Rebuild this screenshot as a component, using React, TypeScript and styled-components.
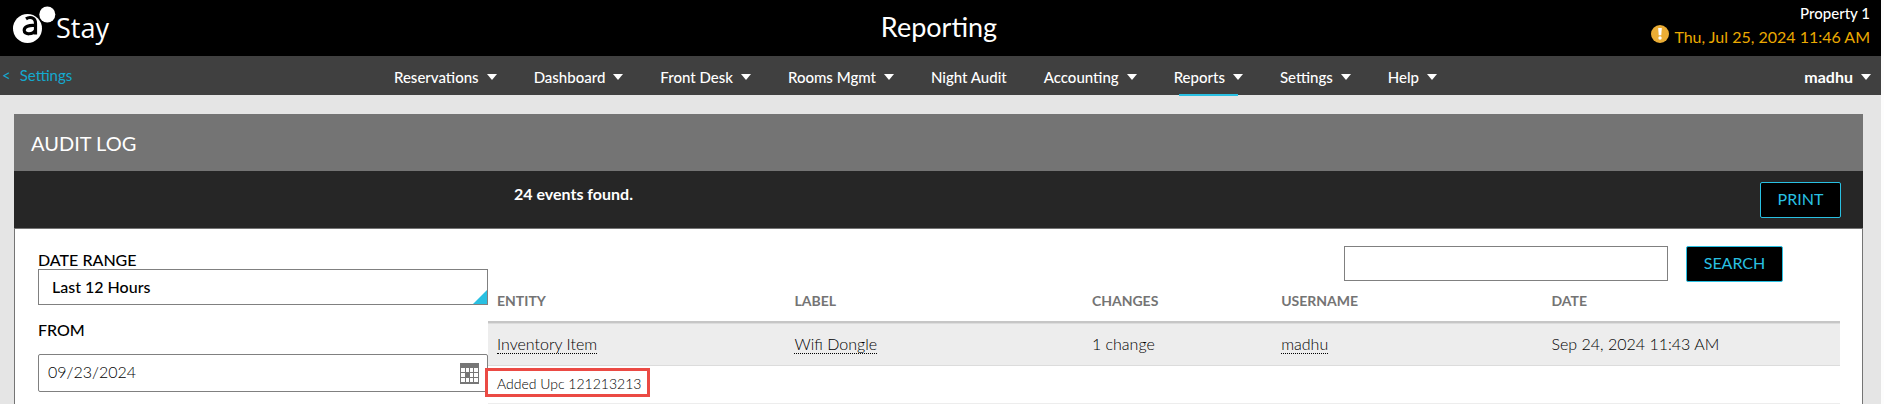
import React from "react";
import styled, { createGlobalStyle } from "styled-components";

const GlobalStyle = createGlobalStyle`
  *, *::before, *::after { box-sizing: border-box; }
  body {
    margin: 0;
    background: #fdfdfd;
    color: #333;
    font: 400 16px/20px Lato, "Liberation Sans", sans-serif;
  }
  button, input, select { font: inherit; }
`;

const Page = styled.div`
  display: flex;
  flex-direction: column;
  min-height: 100vh;
  margin-right: 3px;
  background: #e5e5e5;
`;

const Header = styled.header`
  display: grid;
  grid-template-columns: 1fr auto 1fr;
  align-items: start;
  height: 56px;
  padding: 0 11px 0 12px;
  background: #000;
  color: #fff;
`;

const Logo = styled.a`
  display: flex;
  align-items: flex-start;
  padding-top: 6px;
  color: #fff;
  text-decoration: none;
`;

const LogoText = styled.span`
  padding-top: 6px;
  font: 400 27px/32px "Open Sans", sans-serif;
`;

const Title = styled.h1`
  margin: 0 4px 0 0;
  font-size: 27px;
  font-weight: 400;
  line-height: 53px;
`;

const HeaderInfo = styled.div`
  display: flex;
  flex-direction: column;
  align-items: flex-end;
  gap: 4px;
  padding-top: 3px;
`;

const Property = styled.div`
  font-size: 15px;
  font-weight: 500;
  line-height: 20px;
`;

const Clock = styled.div`
  display: flex;
  align-items: flex-start;
  gap: 5px;
  color: #eba900;

  svg {
    margin-top: -2px;
  }
`;

const Nav = styled.nav`
  display: grid;
  grid-template-columns: 1fr auto 1fr;
  align-items: stretch;
  height: 39px;
  padding: 0 10px 0 2px;
  background: #404040;
`;

const BackLink = styled.a`
  display: flex;
  gap: 9px;
  color: #14a9cf;
  font-size: 15px;
  line-height: 38px;
  text-decoration: none;
`;

const Menu = styled.ul`
  display: flex;
  gap: 37px;
  margin: 0 42px 0 0;
  padding: 0;
  list-style: none;
`;

const MenuItem = styled.li`
  display: flex;
  position: relative;
`;

const ActiveBar = styled.span`
  position: absolute;
  right: 5px;
  bottom: -1px;
  left: 5px;
  height: 2px;
  background: #29c0e2;
`;

const MenuButton = styled.button<{ $bold?: boolean }>`
  display: flex;
  align-items: center;
  gap: 8px;
  padding: 3px 0 0;
  border: 0;
  background: none;
  color: #fff;
  font-size: ${(p) => (p.$bold ? 16 : 15)}px;
  font-weight: ${(p) => (p.$bold ? 700 : 500)};
  cursor: pointer;
`;

const UserArea = styled.div`
  display: flex;
  justify-content: flex-end;
`;

const Caret = styled.span`
  border: 5px solid transparent;
  border-top: 6px solid #fff;
  border-bottom: 0;
`;

const Panel = styled.section`
  display: flex;
  flex: 1;
  flex-direction: column;
  margin: 19px 18px 0 14px;
`;

const PanelTitle = styled.h2`
  margin: 0;
  padding: 1px 17px 0;
  background: #747474;
  color: #fff;
  font-size: 20px;
  font-weight: 400;
  line-height: 56px;
`;

const SummaryBar = styled.div`
  display: flex;
  justify-content: space-between;
  align-items: flex-start;
  height: 57px;
  padding: 11px 22px 0 500px;
  background: #262626;
`;

const Summary = styled.strong`
  padding-top: 2px;
  color: #fff;
  font-size: 16px;
`;

const ActionButton = styled.button<{ $width: number }>`
  width: ${(p) => p.$width}px;
  height: 36px;
  padding: 0 0 2px;
  border: 1px solid #29c0e2;
  border-radius: 2px;
  background: #000;
  color: #29c0e2;
  font-size: 16px;
  cursor: pointer;
`;

const PanelBody = styled.div`
  display: flex;
  flex: 1;
  align-items: flex-start;
  padding: 17px 22px 0 23px;
  border: 1px solid #747474;
  border-bottom: 0;
  background: #fff;
`;

const Filters = styled.form`
  flex: none;
  width: 450px;
  padding-top: 5px;
`;

const FieldLabel = styled.label<{ $gap?: boolean }>`
  display: block;
  padding-bottom: ${(p) => (p.$gap ? 15 : 0)}px;
  color: #000;
  font-size: 16px;
  font-weight: 500;
  line-height: 18px;
`;

const SelectBox = styled.div`
  position: relative;
  margin-bottom: 16px;

  &::after {
    position: absolute;
    right: 1px;
    bottom: 1px;
    border: 7px solid #29c0e2;
    border-top-color: transparent;
    border-left-color: transparent;
    content: "";
    pointer-events: none;
  }
`;

const Select = styled.select`
  display: block;
  width: 100%;
  height: 36px;
  padding: 0 13px;
  border: 1px solid #808080;
  border-radius: 0;
  appearance: none;
  background: #fff;
  color: #000;
  font-weight: 500;
`;

const DateBox = styled.div`
  display: flex;
  align-items: center;
  height: 38px;
  padding: 0 8px 0 9px;
  border: 1px solid #808080;
  border-radius: 2px;
`;

const DateInput = styled.input`
  flex: 1;
  min-width: 0;
  padding: 0 0 2px;
  border: 0;
  outline: 0;
  background: none;
  color: #000;
  font-weight: 300;
`;

const IconButton = styled.button`
  display: flex;
  padding: 0;
  border: 0;
  background: none;
  cursor: pointer;
`;

const Results = styled.div`
  flex: 1;
  min-width: 0;
`;

const SearchForm = styled.form`
  display: flex;
  justify-content: flex-end;
  gap: 18px;
  padding-right: 57px;
`;

const SearchInput = styled.input`
  width: 324px;
  height: 35px;
  padding: 0 8px;
  border: 1px solid #808080;
  background: #fff;
`;

const Table = styled.table`
  width: 100%;
  border-collapse: separate;
  border-spacing: 0;
  table-layout: fixed;
`;

const HeadCell = styled.th<{ $share: number }>`
  width: ${(p) => p.$share}%;
  height: 41px;
  padding: 0 9px 1px;
  border-bottom: 2px solid #c6c6c6;
  color: #747474;
  font-size: 14px;
  font-weight: 700;
  text-align: left;
`;

const Cell = styled.td`
  height: 43px;
  padding: 0 9px 2px;
  border-top: 1px solid #dcdcdc;
  border-bottom: 1px solid #dcdcdc;
  background: #ededed;
  color: #000;
  font-weight: 300;
`;

const DetailCell = styled.td`
  position: relative;
  height: 38px;
  padding: 0 9px 2px;
  border-bottom: 1px solid #ededed;
  color: #000;
  font-size: 14px;
  font-weight: 300;
`;

const Highlight = styled.span`
  position: absolute;
  top: 2px;
  left: -3px;
  width: 165px;
  height: 29px;
  border: 3px solid #eb4a44;
`;

const DottedLink = styled.a`
  display: inline-block;
  border-bottom: 1px dotted #000;
  color: inherit;
  line-height: 18px;
  text-decoration: none;
`;

const menu = [
  { label: "Reservations", caret: true },
  { label: "Dashboard", caret: true },
  { label: "Front Desk", caret: true },
  { label: "Rooms Mgmt", caret: true },
  { label: "Night Audit", caret: false },
  { label: "Accounting", caret: true },
  { label: "Reports", caret: true, active: true },
  { label: "Settings", caret: true },
  { label: "Help", caret: true },
];

const columns = [
  { label: "Entity", share: 22 },
  { label: "Label", share: 22 },
  { label: "Changes", share: 14 },
  { label: "Username", share: 20 },
  { label: "Date", share: 22 },
];

const LogoMark = () => (
  <svg width="44" height="38" viewBox="0 0 44 38" aria-hidden="true">
    <circle cx="15.500" cy="22.500" r="14.500" fill="#fff" />
    <path
      d="M14 12.800C17 10.800 23.500 10.500 23.500 17.500V28.500M23.500 19.500C17 18.800 12.200 20.500 12.200 24.200C12.200 29 21 29 23.500 24"
      fill="none"
      stroke="#000"
      strokeWidth="3.200"
    />
    <circle cx="35" cy="8.500" r="9.200" fill="#000" />
    <circle cx="35.300" cy="8.500" r="8" fill="#fff" />
  </svg>
);

const AlertIcon = () => (
  <svg width="18" height="18" viewBox="0 0 18 18" role="img" aria-label="Alert">
    <circle cx="9" cy="9" r="9" fill="#ebad35" />
    <path d="M7.200 3h3.600l-.5 7.300H7.700z" fill="#fff" />
    <circle cx="9" cy="13" r="1.700" fill="#fff" />
  </svg>
);

const CalendarIcon = () => (
  <svg width="19" height="21" viewBox="0 0 19 21" aria-hidden="true">
    <path d="M0 0h19v21H0z" fill="#777" />
    <path
      d="M1 5h4v4H1zM6 5h3v4H6zM10 5h3v4h-3zM14 5h4v4h-4zM1 10h4v4H1zM10 10h3v4h-3zM14 10h4v4h-4zM1 15h4v4H1zM6 15h3v4H6zM10 15h3v4h-3zM14 15h4v4h-4z"
      fill="#fff"
    />
  </svg>
);

export default function App() {
  return (
    <>
      <GlobalStyle />
      <Page>
        <Header>
          <Logo href="#">
            <LogoMark />
            <LogoText>Stay</LogoText>
          </Logo>
          <Title>Reporting</Title>
          <HeaderInfo>
            <Property>Property 1</Property>
            <Clock>
              <AlertIcon />
              <span>Thu, Jul 25, 2024 11:46 AM</span>
            </Clock>
          </HeaderInfo>
        </Header>
        <Nav>
          <BackLink href="#">
            <span>&lt;</span>
            <span>Settings</span>
          </BackLink>
          <Menu>
            {menu.map((m) => (
              <MenuItem key={m.label}>
                <MenuButton type="button">
                  {m.label}
                  {m.caret && <Caret />}
                </MenuButton>
                {m.active && <ActiveBar />}
              </MenuItem>
            ))}
          </Menu>
          <UserArea>
            <MenuButton type="button" $bold>
              madhu
              <Caret />
            </MenuButton>
          </UserArea>
        </Nav>
        <Panel>
          <PanelTitle>AUDIT LOG</PanelTitle>
          <SummaryBar>
            <Summary>24 events found.</Summary>
            <ActionButton type="button" $width={81}>
              PRINT
            </ActionButton>
          </SummaryBar>
          <PanelBody>
            <Filters>
              <FieldLabel htmlFor="range">DATE RANGE</FieldLabel>
              <SelectBox>
                <Select id="range" defaultValue="12h">
                  <option value="12h">Last 12 Hours</option>
                </Select>
              </SelectBox>
              <FieldLabel htmlFor="from" $gap>
                FROM
              </FieldLabel>
              <DateBox>
                <DateInput id="from" type="text" defaultValue="09/23/2024" />
                <IconButton type="button" aria-label="Choose date">
                  <CalendarIcon />
                </IconButton>
              </DateBox>
            </Filters>
            <Results>
              <SearchForm onSubmit={(e) => e.preventDefault()}>
                <SearchInput type="text" aria-label="Search events" />
                <ActionButton type="submit" $width={97}>
                  SEARCH
                </ActionButton>
              </SearchForm>
              <Table>
                <thead>
                  <tr>
                    {columns.map((c) => (
                      <HeadCell key={c.label} $share={c.share}>
                        {c.label.toUpperCase()}
                      </HeadCell>
                    ))}
                  </tr>
                </thead>
                <tbody>
                  <tr>
                    <Cell>
                      <DottedLink href="#">Inventory Item</DottedLink>
                    </Cell>
                    <Cell>
                      <DottedLink href="#">Wifi Dongle</DottedLink>
                    </Cell>
                    <Cell>1 change</Cell>
                    <Cell>
                      <DottedLink href="#">madhu</DottedLink>
                    </Cell>
                    <Cell>Sep 24, 2024 11:43 AM</Cell>
                  </tr>
                  <tr>
                    <DetailCell colSpan={5}>
                      Added Upc 121213213
                      <Highlight />
                    </DetailCell>
                  </tr>
                </tbody>
              </Table>
            </Results>
          </PanelBody>
        </Panel>
      </Page>
    </>
  );
}
